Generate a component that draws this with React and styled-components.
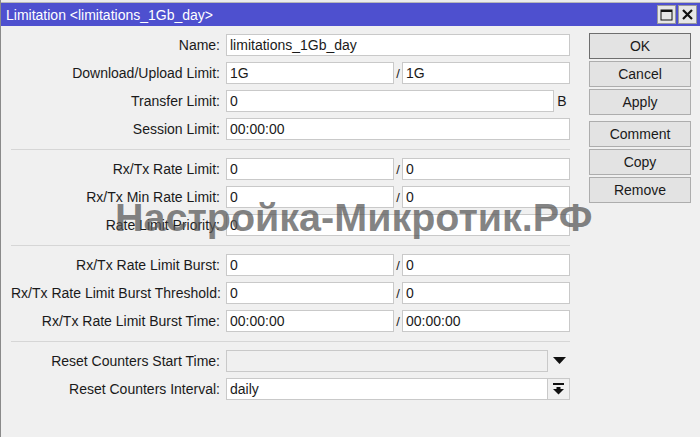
import React from 'react';
import styled, { createGlobalStyle } from 'styled-components';

const GlobalStyle = createGlobalStyle`
  html, body {
    margin: 0;
    padding: 0;
    background: #f0f0f0;
  }
  * {
    box-sizing: border-box;
  }
`;

const Window = styled.div`
  position: relative;
  width: 700px;
  height: 437px;
  background: #f0f0f0;
  border-left: 1px solid #8a8a8a;
  font-family: "Liberation Sans", Arial, sans-serif;
  font-size: 14px;
  color: #1a1a1a;
  overflow: hidden;
`;

const TopStrip = styled.div`
  height: 3px;
  background: #ececec;
  border-bottom: 1px solid #b8b8b8;
`;

const TitleBar = styled.div`
  height: 23px;
  background: #4e50cf;
  display: flex;
  align-items: center;
  padding: 0 3px 0 5px;
  color: #fff;
`;

const Title = styled.div`
  flex: 1;
  font-size: 14px;
  white-space: nowrap;
`;

const TitleButton = styled.div`
  width: 19px;
  height: 19px;
  margin-left: 2px;
  background: #e6e6e6;
  border: 1px solid #9a9a9a;
  display: flex;
  align-items: center;
  justify-content: center;
`;

const Body = styled.div`
  display: flex;
  align-items: flex-start;
`;

const Form = styled.div`
  width: 569px;
  padding-top: 5px;
  display: flex;
  flex-direction: column;
`;

const Row = styled.div`
  display: grid;
  grid-template-columns: 209px 344px;
  column-gap: 6px;
  padding-left: 10px;
  height: 28px;
  align-items: center;
`;

const Label = styled.div`
  text-align: right;
  white-space: nowrap;
`;

const Field = styled.input`
  width: 100%;
  height: 22px;
  border: 1px solid #c9c9c9;
  background: ${p => (p.disabled ? '#f0f0f0' : '#fff')};
  font-family: "Liberation Sans", Arial, sans-serif;
  font-size: 14px;
  color: #1a1a1a;
  padding: 0 3px;
  margin: 0;
  outline: none;
`;

const Pair = styled.div`
  display: grid;
  grid-template-columns: 1fr 8px 1fr;
  align-items: center;
`;

const Slash = styled.span`
  text-align: center;
  font-size: 13px;
`;

const WithSuffix = styled.div`
  display: grid;
  grid-template-columns: 1fr ${p => p.$suffix || '22px'};
  align-items: center;
`;

const Suffix = styled.div`
  display: flex;
  align-items: center;
  justify-content: center;
`;

const SideButton = styled.div`
  height: 22px;
  border: 1px solid #c9c9c9;
  border-left: none;
  background: #f0f0f0;
  display: flex;
  align-items: center;
  justify-content: center;
`;

const Separator = styled.div`
  margin: 6px 0 5px 10px;
  border-top: 1px solid #d6d6d6;
`;

const Buttons = styled.div`
  width: 102px;
  margin-left: 19px;
  padding-top: 7px;
  display: flex;
  flex-direction: column;
`;

const Button = styled.div`
  height: 26px;
  margin-bottom: 2px;
  margin-top: ${p => (p.$gap ? '4px' : '0')};
  background: #e3e3e3;
  border: 1px solid ${p => (p.$primary ? '#6e6e6e' : '#adadad')};
  display: flex;
  align-items: center;
  justify-content: center;
  font-size: 14px;
`;

const Watermark = styled.div`
  position: absolute;
  left: 114px;
  top: 195px;
  font-family: "Liberation Sans", Arial, sans-serif;
  font-weight: bold;
  font-size: 39.5px;
  color: rgba(85, 85, 85, 0.72);
  white-space: nowrap;
  pointer-events: none;
`;

const MaxIcon = () => (
  <svg width="13" height="12" viewBox="0 0 13 12">
    <rect x="1" y="1" width="11" height="10" fill="none" stroke="#111" strokeWidth="1" />
    <rect x="1" y="1" width="11" height="2" fill="#111" />
  </svg>
);

const CloseIcon = () => (
  <svg width="11" height="11" viewBox="0 0 11 11">
    <path d="M1 1 L10 10 M10 1 L1 10" stroke="#111" strokeWidth="2.2" />
  </svg>
);

const DownTriangle = () => (
  <svg width="13" height="8" viewBox="0 0 13 8">
    <polygon points="0,0 13,0 6.5,7" fill="#111" />
  </svg>
);

const ToBottomIcon = () => (
  <svg width="11" height="12" viewBox="0 0 11 12">
    <rect x="0" y="0" width="11" height="2" fill="#111" />
    <rect x="3.5" y="4" width="4" height="3" fill="#111" />
    <polygon points="0,6 11,6 5.5,11.5" fill="#111" />
  </svg>
);

const TextRow = ({ label, value }) => (
  <Row>
    <Label>{label}</Label>
    <Field readOnly value={value} />
  </Row>
);

const PairRow = ({ label, first, second }) => (
  <Row>
    <Label>{label}</Label>
    <Pair>
      <Field readOnly value={first} />
      <Slash>/</Slash>
      <Field readOnly value={second} />
    </Pair>
  </Row>
);

export default function App() {
  return (
    <Window>
      <GlobalStyle />
      <TopStrip />
      <TitleBar>
        <Title>Limitation &lt;limitations_1Gb_day&gt;</Title>
        <TitleButton><MaxIcon /></TitleButton>
        <TitleButton><CloseIcon /></TitleButton>
      </TitleBar>
      <Body>
        <Form>
          <TextRow label="Name:" value="limitations_1Gb_day" />
          <PairRow label="Download/Upload Limit:" first="1G" second="1G" />
          <Row>
            <Label>Transfer Limit:</Label>
            <WithSuffix $suffix="16px">
              <Field readOnly value="0" />
              <Suffix>B</Suffix>
            </WithSuffix>
          </Row>
          <TextRow label="Session Limit:" value="00:00:00" />
          <Separator />
          <PairRow label="Rx/Tx Rate Limit:" first="0" second="0" />
          <PairRow label="Rx/Tx Min Rate Limit:" first="0" second="0" />
          <TextRow label="Rate Limit Priority:" value="0" />
          <Separator />
          <PairRow label="Rx/Tx Rate Limit Burst:" first="0" second="0" />
          <PairRow label="Rx/Tx Rate Limit Burst Threshold:" first="0" second="0" />
          <PairRow label="Rx/Tx Rate Limit Burst Time:" first="00:00:00" second="00:00:00" />
          <Separator />
          <Row>
            <Label>Reset Counters Start Time:</Label>
            <WithSuffix>
              <Field readOnly disabled value="" />
              <Suffix><DownTriangle /></Suffix>
            </WithSuffix>
          </Row>
          <Row>
            <Label>Reset Counters Interval:</Label>
            <WithSuffix>
              <Field readOnly value="daily" />
              <SideButton><ToBottomIcon /></SideButton>
            </WithSuffix>
          </Row>
        </Form>
        <Buttons>
          <Button $primary>OK</Button>
          <Button>Cancel</Button>
          <Button>Apply</Button>
          <Button $gap>Comment</Button>
          <Button>Copy</Button>
          <Button>Remove</Button>
        </Buttons>
      </Body>
      <Watermark>Настройка-Микротик.РФ</Watermark>
    </Window>
  );
}
